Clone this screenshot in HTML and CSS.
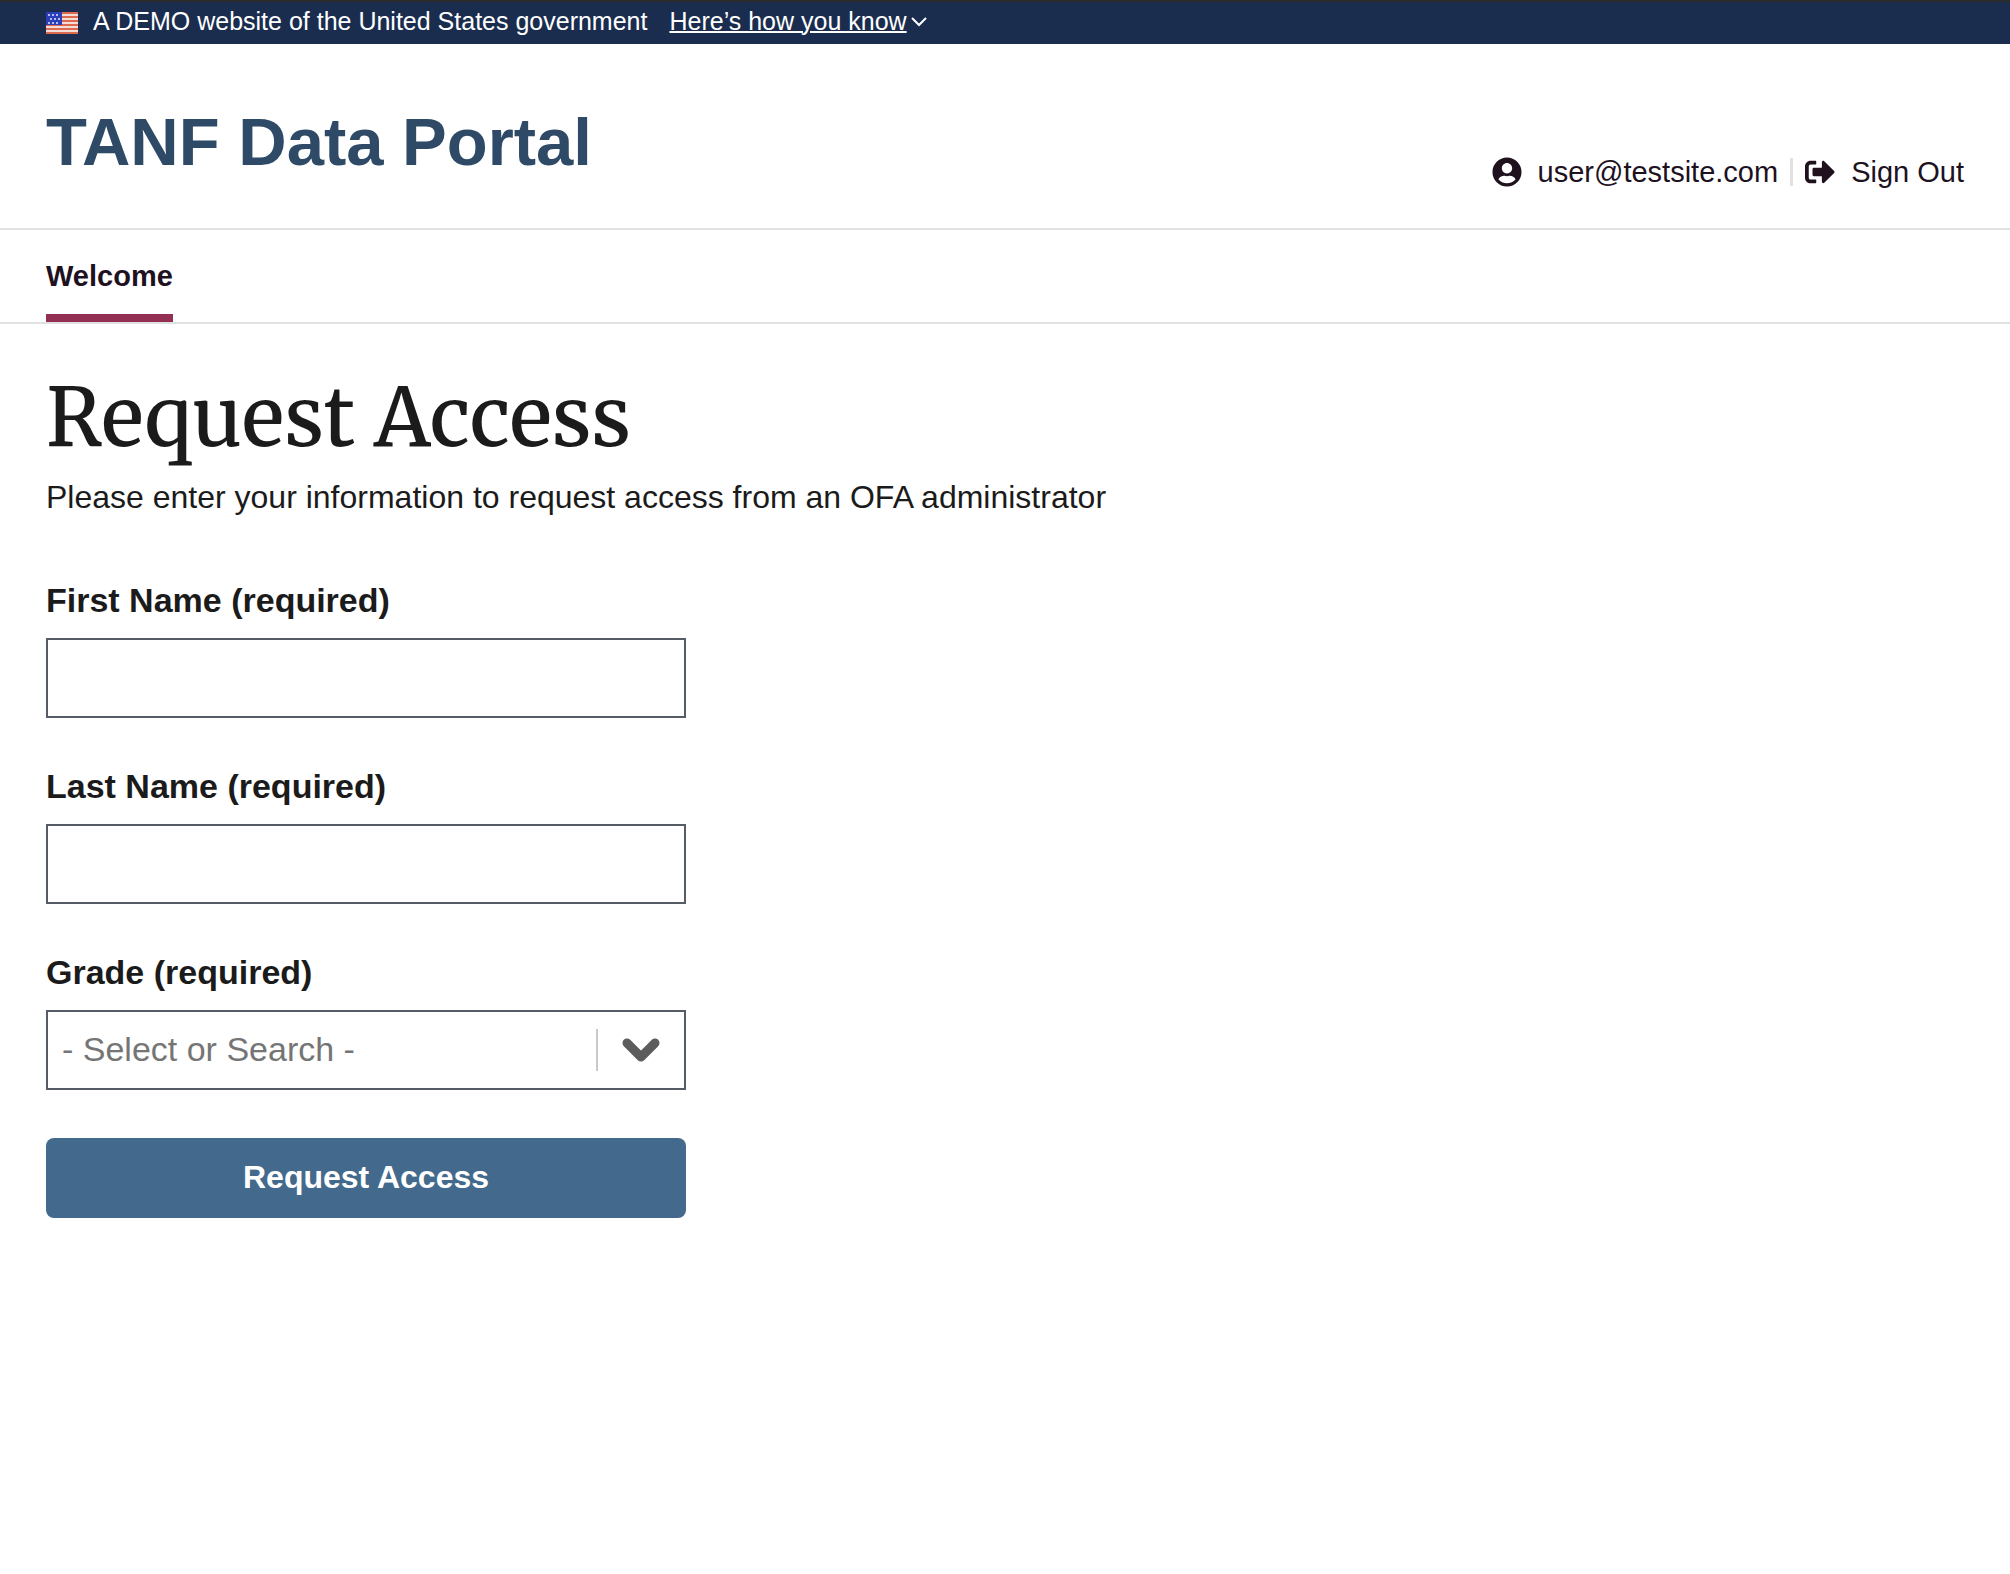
FILE: index.html
```html
<!DOCTYPE html>
<html lang="en">
<head>
<meta charset="utf-8">
<meta name="viewport" content="width=device-width, initial-scale=1">
<title>TANF Data Portal</title>
<link rel="stylesheet" href="styles.css">
</head>
<body>
<div class="banner">
  <svg class="banner-flag" viewBox="0 0 32 22" aria-hidden="true">
    <rect width="32" height="22" fill="#f6dcd6"/>
    <path fill="#dc6a50" d="M0 0h32v2H0zM0 4h32v2H0zM0 8h32v2H0zM0 12h32v2H0zM0 16h32v2H0zM0 20h32v2H0z"/>
    <rect width="16" height="13" fill="#2b3fbb"/>
    <path fill="#b4bdf0" d="M2 2h2v2H2zM6 2h2v2H6zM10 2h2v2h-2zM4 6h2v2H4zM8 6h2v2H8zM12 6h2v2h-2zM2 10h2v2H2zM6 10h2v2H6zM10 10h2v2h-2z"/>
  </svg>
  <span class="banner-text">A DEMO website of the United States government</span>
  <button class="banner-button" type="button"><span class="banner-link">Here’s how you know</span><svg class="banner-chevron" viewBox="0 0 16 10" aria-hidden="true"><path d="M1 1l7 7 7-7" fill="none" stroke="#fff" stroke-width="2"/></svg></button>
</div>
<header class="header">
  <a class="site-title" href="#">TANF Data Portal</a>
  <div class="account">
    <a class="account-link" href="#">
      <svg class="account-icon" viewBox="0 0 496 512" aria-hidden="true"><path d="M248 8C111 8 0 119 0 256s111 248 248 248 248-111 248-248S385 8 248 8zm0 96c48.600 0 88 39.400 88 88s-39.400 88-88 88-88-39.400-88-88 39.400-88 88-88zm0 344c-58.700 0-111.300-26.600-146.500-68.200 18.800-35.400 55.600-59.800 98.500-59.800 2.400 0 4.800.4 7.100 1.100 13 4.200 26.600 6.900 40.900 6.900 14.300 0 28-2.700 40.900-6.900 2.300-.7 4.700-1.100 7.100-1.100 42.900 0 79.700 24.400 98.500 59.800C359.300 421.400 306.700 448 248 448z"/></svg>
      user@testsite.com</a>
    <a class="account-link account-signout" href="#">
      <svg class="account-icon" viewBox="0 0 512 512" aria-hidden="true"><path d="M497 273L329 441c-15 15-41 4.500-41-17v-96H152c-13.300 0-24-10.700-24-24v-96c0-13.300 10.700-24 24-24h136V88c0-21.400 25.900-32 41-17l168 168c9.300 9.400 9.300 24.600 0 34zM192 436v-40c0-6.600-5.400-12-12-12H96c-17.700 0-32-14.300-32-32V160c0-17.700 14.300-32 32-32h84c6.600 0 12-5.400 12-12V76c0-6.600-5.400-12-12-12H96c-53 0-96 43-96 96v192c0 53 43 96 96 96h84c6.600 0 12-5.400 12-12z"/></svg>
      Sign Out</a>
  </div>
</header>
<nav class="nav">
  <a class="nav-link" href="#">Welcome</a>
</nav>
<main class="main">
  <h1 class="title">Request Access</h1>
  <p class="intro">Please enter your information to request access from an OFA administrator</p>
  <form class="form">
    <div class="field">
      <label class="label" for="first-name">First Name (required)</label>
      <input class="control" id="first-name" type="text">
    </div>
    <div class="field">
      <label class="label" for="last-name">Last Name (required)</label>
      <input class="control" id="last-name" type="text">
    </div>
    <div class="field">
      <label class="label" for="grade">Grade (required)</label>
      <div class="combo">
        <select class="control combo-select" id="grade">
          <option>- Select or Search -</option>
        </select>
        <svg class="combo-chevron" viewBox="0 0 38 24" aria-hidden="true"><path d="M5 5l14 14L33 5" fill="none" stroke="#5c5c5c" stroke-width="9" stroke-linecap="round" stroke-linejoin="round"/></svg>
      </div>
    </div>
    <button class="submit" type="submit">Request Access</button>
  </form>
</main>
</body>
</html>
```

FILE: styles.css
```css
* {
  box-sizing: border-box;
}

body {
  margin: 0;
  background: #fff;
  color: #1b1b1b;
  font-family: "Liberation Sans", Arial, sans-serif;
}

a {
  color: inherit;
  text-decoration: none;
}

/* Government banner */
.banner {
  display: flex;
  align-items: center;
  padding: 3px 46px 7px;
  border-top: 2px solid #2b2b2d;
  background: #1a2d4f;
  color: #fff;
  font-size: 25px;
  line-height: 32px;
}

.banner-flag {
  width: 32px;
  height: 22px;
  margin: 4px 15px 0 0;
}

.banner-button {
  display: flex;
  align-items: center;
  gap: 4px;
  margin: 0 0 0 22px;
  padding: 0;
  border: 0;
  background: none;
  color: inherit;
  font: inherit;
}

.banner-link {
  text-decoration: underline;
  text-decoration-thickness: 2px;
}

.banner-chevron {
  width: 16px;
  height: 10px;
  margin-top: 2px;
}

/* Header */
.header {
  display: flex;
  align-items: flex-end;
  justify-content: space-between;
  padding: 58px 46px 38px;
  border-bottom: 2px solid #dfe1e2;
}

.site-title {
  margin-bottom: 8px;
  color: #2e4a66;
  font-size: 67px;
  font-weight: 700;
  line-height: 80px;
}

.account {
  display: flex;
  align-items: center;
}

.account-link {
  display: flex;
  align-items: center;
  gap: 16px;
  color: #20111f;
  font-size: 29px;
  line-height: 36px;
}

.account-signout {
  margin-left: 12px;
  padding-left: 12px;
  border-left: 3px solid #dfe1e2;
  line-height: 28px;
}

.account-icon {
  width: 30px;
  height: 30px;
  margin: -1px 0;
  fill: currentColor;
}

/* Navigation */
.nav {
  display: flex;
  padding: 28px 46px 0;
  border-bottom: 2px solid #dfe1e2;
}

.nav-link {
  padding-bottom: 20px;
  border-bottom: 8px solid #932f52;
  color: #20111f;
  font-size: 29px;
  font-weight: 700;
  line-height: 36px;
}

/* Request form */
.main {
  padding: 46px;
}

.title {
  margin: 0 0 7px;
  font-family: Merriweather, "DejaVu Serif Condensed", "DejaVu Serif", serif;
  font-size: 80px;
  font-weight: 500;
  line-height: 96px;
}

.intro {
  margin: 0;
  font-size: 32px;
  line-height: 48px;
}

.form {
  display: flex;
  flex-direction: column;
  gap: 46px;
  max-width: 640px;
  margin-top: 57px;
}

.field {
  display: flex;
  flex-direction: column;
  gap: 16px;
}

.label {
  font-size: 34px;
  font-weight: 700;
  line-height: 44px;
}

.control {
  width: 100%;
  height: 80px;
  padding: 0 14px 2px;
  border: 2px solid #565c65;
  border-radius: 0;
  background: #fff;
  color: inherit;
  font-family: inherit;
  font-size: 34px;
}

.combo {
  display: grid;
  align-items: center;
}

.combo > * {
  grid-area: 1 / 1;
}

.combo-select {
  appearance: none;
  color: #757575;
}

.combo-chevron {
  justify-self: end;
  box-sizing: content-box;
  width: 38px;
  height: 24px;
  padding: 9px 26px 9px 24px;
  border-left: 2px solid #c6cace;
  pointer-events: none;
}

.submit {
  height: 80px;
  margin-top: 2px;
  padding: 0 40px 2px;
  border: 0;
  border-radius: 8px;
  background: #436a8c;
  color: #fff;
  font-family: inherit;
  font-size: 32px;
  font-weight: 700;
}
```
